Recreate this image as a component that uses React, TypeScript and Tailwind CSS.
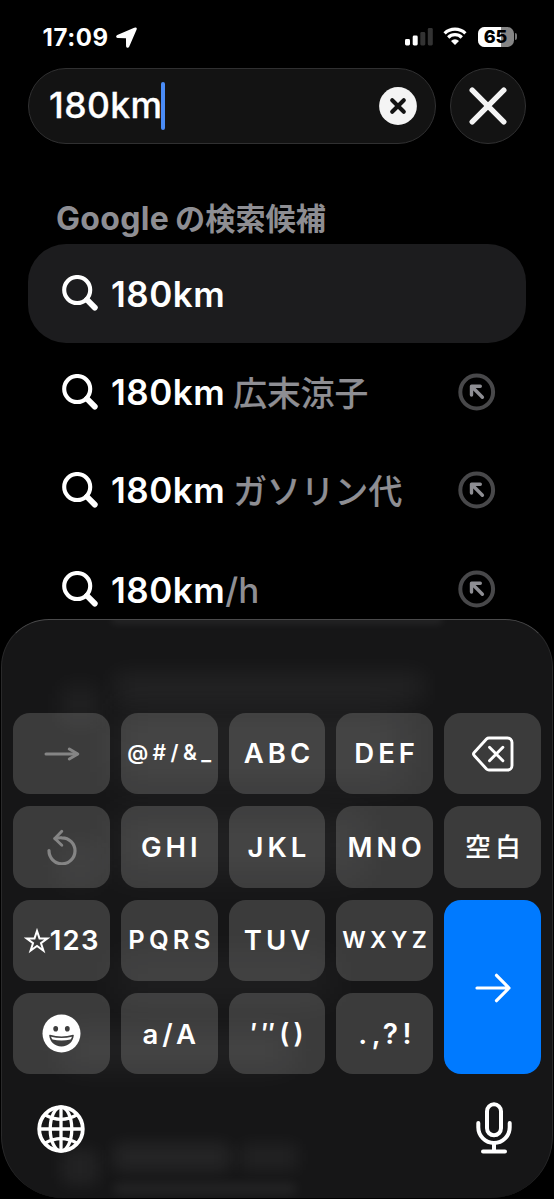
import React from "react";

interface Suggestion {
  id: number;
  typed: string;
  rest: string;
  cjk?: boolean;
}

interface KeyItem {
  id: string;
  label: React.ReactNode;
  className?: string;
}

const suggestions: Suggestion[] = [
  { id: 1, typed: "180km", rest: "" },
  { id: 2, typed: "180km", rest: "広末涼子", cjk: true },
  { id: 3, typed: "180km", rest: "ガソリン代", cjk: true },
  { id: 4, typed: "180km", rest: "/h" },
];

const SearchIcon = () => (
  <svg className="w-9 h-9 shrink-0" viewBox="0 0 36 36" fill="none" stroke="#fff">
    <circle cx="15.2" cy="15" r="13" strokeWidth="4.1" />
    <path d="M25 24.8l7.8 7.8" strokeWidth="5.8" strokeLinecap="round" />
  </svg>
);

const FillIcon = () => (
  <svg className="w-[38px] h-[38px] shrink-0" viewBox="0 0 38 38" fill="none">
    <circle cx="18.7" cy="19" r="16.4" stroke="#48484a" strokeWidth="4" />
    <path
      d="M22.3 13.2H13.5V22M14 13.7l10.4 10.6"
      stroke="#8e8e93"
      strokeWidth="3.4"
      strokeLinecap="round"
      strokeLinejoin="round"
    />
  </svg>
);

const StatusBar = () => (
  <div className="h-[68px] flex items-start pt-[25px] pl-[42.5px] pr-[37.5px]">
    <span className="text-[24px] leading-[25px] font-bold text-white w-[68px] whitespace-nowrap tracking-[0.6px]">
      17:09
    </span>
    <svg className="w-[21px] h-[21px] ml-[5px] mt-[1.5px]" viewBox="0 0 20 20" fill="#fff" stroke="#fff" strokeWidth="1.4" strokeLinejoin="round">
      <path d="M18.2 1.2 1.5 8.3c-1 .5-.8 1.5.3 1.5l7.6.1c.6 0 .8.3.8.8l.1 7.4c0 1.1 1.1 1.4 1.6.4L19 2c.3-.6-.2-1.1-.8-.8z" />
    </svg>
    <div className="ml-auto flex items-start">
      <svg className="w-7 h-[18px] mt-[3px]" viewBox="0 0 28 18">
        <rect x="0" y="11" width="5" height="6.5" rx="1.4" fill="#fff" />
        <rect x="7.7" y="7.5" width="5" height="10" rx="1.4" fill="#fff" />
        <rect x="15.3" y="4" width="5" height="13.5" rx="1.4" fill="#333" />
        <rect x="22.8" y="0" width="5" height="17.5" rx="1.4" fill="#333" />
      </svg>
      <svg className="w-6 h-[18px] ml-[10.5px] mt-[2px]" viewBox="0 0 24 18" fill="none" stroke="#fff">
        <path d="M1.6 6.4a15 15 0 0 1 20.8 0" strokeWidth="3.3" />
        <path d="M5.2 10.5a9.6 9.6 0 0 1 13.6 0" strokeWidth="3.2" />
        <path d="M12 18l-4-4.1a5.8 5.8 0 0 1 8 0z" fill="#fff" stroke="none" />
      </svg>
      <div className="relative ml-[10.5px] mt-[2px] w-9 h-5 rounded-[6.5px] overflow-hidden bg-[#858585]">
        <div className="w-[23.5px] h-5 bg-white" />
        <span className="absolute inset-0 text-center text-[18px] leading-5 font-extrabold text-black">
          65
        </span>
      </div>
      <div className="w-[2px] h-[7px] ml-[1px] mt-[8px] rounded-r-full bg-[#777]" />
    </div>
  </div>
);

const SearchBar = () => (
  <div className="flex gap-[14px] px-7">
    <div className="w-[408px] h-[76px] rounded-full border border-[#303031] bg-[#131313] flex items-center pl-[20px] pr-[18px] pb-[1px]">
      <span className="text-[35.5px] leading-none font-medium text-white w-[112px] tracking-[0.4px] whitespace-nowrap [-webkit-text-stroke:0.3px]">
        180km
      </span>
      <div className="relative w-[3.5px] h-[48px] rounded-full bg-[#4a8cf7]" />
      <svg className="w-[38px] h-[38px] ml-auto" viewBox="0 0 38 38">
        <circle cx="19" cy="19" r="18.9" fill="#f4f4f4" />
        <path d="M13.2 13.2l11.6 11.6M24.8 13.2L13.2 24.8" stroke="#131313" strokeWidth="4.1" strokeLinecap="round" />
      </svg>
    </div>
    <div className="w-[76px] h-[76px] rounded-full border border-[#303031] bg-[#131313] flex items-center justify-center pb-[1px]">
      <svg className="w-[38px] h-[38px]" viewBox="0 0 38 38">
        <path d="M3.2 3.2l31.6 31.6M34.8 3.2L3.2 34.8" stroke="#f4f4f4" strokeWidth="5.4" strokeLinecap="round" />
      </svg>
    </div>
  </div>
);

// Soft shapes of the list shining through the keyboard glass
const glows = [
  "left-[110px] top-[-5px] w-[330px] h-[8px] bg-white/8 blur-[4px]",
  "left-[112px] top-[54px] w-[310px] h-[26px] bg-white/6 blur-[12px]",
  "left-[60px] top-[66px] w-[36px] h-[36px] bg-white/5 blur-[12px]",
  "left-[112px] top-[90px] w-[290px] h-[76px] bg-white/5 blur-[20px]",
  "left-[60px] top-[228px] w-[36px] h-[36px] bg-white/5 blur-[16px]",
  "left-[112px] top-[195px] w-[250px] h-[60px] bg-white/5 blur-[20px]",
  "left-[112px] top-[340px] w-[220px] h-[36px] bg-white/5 blur-[20px]",
  "left-[60px] top-[412px] w-[230px] h-[36px] bg-white/5 blur-[16px]",
  "left-[112px] top-[524px] w-[116px] h-[26px] bg-white/7 blur-[9px]",
  "left-[238px] top-[524px] w-[58px] h-[26px] bg-white/5 blur-[9px]",
  "left-[60px] top-[530px] w-[36px] h-[34px] bg-white/6 blur-[9px]",
  "left-[112px] top-[564px] w-[182px] h-[10px] bg-white/7 blur-[6px]",
];

const keys: KeyItem[] = [
  {
    id: "next",
    label: (
      <svg className="w-9 h-[18px]" viewBox="0 0 36 18" fill="none" stroke="#858585" strokeLinecap="round" strokeLinejoin="round">
        <path d="M2 9h31" strokeWidth="3" />
        <path d="M25.3 4l8.5 5-8.5 5" strokeWidth="3" />
      </svg>
    ),
    className: "pt-[1px]",
  },
  { id: "sym", label: "@#/&_", className: "text-[21px] font-semibold tracking-[4.4px] pl-[4px] pb-[1px]" },
  { id: "abc", label: "ABC", className: "text-[27.5px] font-semibold tracking-[4px] pl-[4px] pt-[1px]" },
  { id: "def", label: "DEF", className: "text-[27.5px] font-semibold tracking-[4px] pl-[4px] pt-[1px]" },
  {
    id: "delete",
    label: (
      <svg className="w-[42px] h-[36px]" viewBox="0 0 42 36" fill="none" stroke="#fff" strokeLinecap="round" strokeLinejoin="round">
        <path d="M17 2h18.5a4.5 4.5 0 0 1 4.5 4.5v23a4.5 4.5 0 0 1-4.5 4.5H17q-1.5 0-2.5-1L2.2 19.5q-1.4-1.5 0-3L14.5 3Q15.5 2 17 2z" strokeWidth="2.9" />
        <path d="M17.5 11.3l13.4 13.4M30.9 11.3L17.5 24.7" strokeWidth="3" />
      </svg>
    ),
    className: "pl-[1px] pt-[2px]",
  },
  {
    id: "undo",
    label: (
      <svg className="w-[32px] h-[36px]" viewBox="0 0 32 36" fill="none" stroke="#858585" strokeWidth="3.2" strokeLinecap="round" strokeLinejoin="round">
        <path d="M3 21.5A13 13 0 1 0 16 8.8q-3.6-.2-7 .8" />
        <path d="M15.8 2.3L8.8 9.5l7 6.7" strokeWidth="2.9" />
      </svg>
    ),
    className: "pt-[1px]",
  },
  { id: "ghi", label: "GHI", className: "text-[27.5px] font-semibold tracking-[4px] pl-[4px] pt-[1px]" },
  { id: "jkl", label: "JKL", className: "text-[27.5px] font-semibold tracking-[4px] pl-[4px] pt-[1px]" },
  { id: "mno", label: "MNO", className: "text-[27px] font-semibold tracking-[4px] pl-[4px] pt-[1px]" },
  { id: "space", label: "空白", className: "text-[25.5px] font-medium tracking-[4.5px] pl-[6px] [-webkit-text-stroke:0.15px]" },
  {
    id: "num",
    label: (
      <>
        <svg className="w-[26px] h-[26px]" viewBox="0 0 25 25" fill="none" stroke="#fff" strokeWidth="1.9">
          <path d="M12.5 2.8l2.4 7.2h7.6l-6.2 4.5 2.4 7.3-6.2-4.5-6.2 4.5 2.4-7.3L2.5 10h7.6z" />
        </svg>
        <span>123</span>
      </>
    ),
    className: "text-[27.5px] font-semibold tracking-[1.3px] pt-[1px]",
  },
  { id: "pqrs", label: "PQRS", className: "text-[25.5px] font-semibold tracking-[4.2px] pl-[4px] pb-[1px]" },
  { id: "tuv", label: "TUV", className: "text-[27.5px] font-semibold tracking-[4px] pl-[4px] pt-[1px]" },
  { id: "wxyz", label: "WXYZ", className: "text-[23px] font-semibold tracking-[4.4px] pl-[4px]" },
  {
    id: "go",
    label: (
      <svg className="w-9 h-[30px]" viewBox="0 0 36 30" fill="none" stroke="#fff" strokeWidth="3.2" strokeLinecap="round" strokeLinejoin="round">
        <path d="M2 15h32M21.5 2.3L34 15 21.5 27.7" />
      </svg>
    ),
    className: "row-span-2 bg-[#007aff] pl-[2px] pt-[1px]",
  },
  {
    id: "emoji",
    label: (
      <svg className="w-[39px] h-[39px]" viewBox="0 0 39 39">
        <circle cx="19.5" cy="19.5" r="19" fill="#fff" />
        <ellipse cx="13.7" cy="14.8" rx="2.4" ry="2.8" fill="#3e3e3e" />
        <ellipse cx="25.3" cy="14.8" rx="2.4" ry="2.8" fill="#3e3e3e" />
        <path d="M8 20.8q11.5 3.4 23 0c.5-.1.9.2.8.8-.7 6.3-5.3 10.9-12.3 10.9S7.9 27.9 7.2 21.6c-.1-.6.3-.9.8-.8z" fill="#3e3e3e" />
        <path d="M9 22.7q10.5 2.7 21 0-.5 1.7-1.5 2.8-9 2.2-18 0-1-1.1-1.5-2.8z" fill="#fff" />
      </svg>
    ),
  },
  { id: "case", label: "a/A", className: "text-[27.5px] font-semibold tracking-[4px] pl-[4px] pt-[1px]" },
  { id: "quote", label: "′″()", className: "text-[27px] font-semibold tracking-[4px] pl-[4px]" },
  { id: "punct", label: ".,?!", className: "text-[28px] font-semibold tracking-[4.6px] pl-[5px]" },
];

const GlobeIcon = () => (
  <svg className="w-12 h-12 mt-[2px]" viewBox="0 0 48 48" fill="none" stroke="#fff" strokeWidth="3.3">
    <circle cx="24" cy="24" r="21.8" strokeWidth="3.8" />
    <ellipse cx="24" cy="24" rx="10.8" ry="22" />
    <path d="M24 2v44M2 24h44" />
    <path d="M7.5 9.5q16.5 9.6 33 0M7.5 38.5q16.5-9.6 33 0" />
  </svg>
);

const MicIcon = () => (
  <svg className="w-9 h-[52px]" viewBox="0 0 36 52" fill="none" stroke="#fff" strokeWidth="4" strokeLinecap="round">
    <rect x="11" y="2.3" width="14" height="31" rx="7" />
    <path d="M2.3 21v4.3a15.7 15.7 0 0 0 31.4 0V21M18 41.5v8M7 49.5h22" />
  </svg>
);

const Keyboard = () => (
  <div className="relative w-[552px] h-[579px] mx-auto mt-[-19px] rounded-t-[48px] rounded-b-[62px] overflow-hidden bg-[#161617] border border-b-0 border-[#29292a] border-t-[#4a4a4b]">
    {glows.map((glow) => (
      <div key={glow} className={`absolute ${glow}`} />
    ))}
    <div className="relative grid grid-cols-5 grid-rows-4 gap-x-[10.8px] gap-y-[12.2px] h-[361.5px] mt-[92.5px] mx-[11.3px]">
      {keys.map((key) => (
        <button
          key={key.id}
          className={`flex items-center justify-center min-w-0 rounded-[17px] text-white whitespace-nowrap leading-none ${
            key.id === "go" ? "" : "bg-[#fffffa]/16"
          } ${key.className ?? ""}`}
        >
          {key.label}
        </button>
      ))}
    </div>
    <div className="relative flex justify-between items-center mt-[28px] pl-[34.5px] pr-[40px]">
      <GlobeIcon />
      <MicIcon />
    </div>
  </div>
);

const App = () => {
  return (
    <div
      lang="ja"
      className="w-[554px] h-[1199px] overflow-hidden bg-black font-['Inter','Noto_Sans_CJK_JP',sans-serif]"
    >
      <StatusBar />
      <SearchBar />

      <h2 className="h-[100px] pt-[56px] pl-[56px] leading-[38px] font-bold text-[#8e8e93] whitespace-nowrap">
        <span className="text-[32px] tracking-[0.3px]">Google</span>
        <span className="ml-[6px] text-[30.2px]">の検索候補</span>
      </h2>

      <div className="px-7">
        {suggestions.map((item, index) => (
          <div
            key={item.id}
            className={`h-[98.6px] flex items-center pl-[34px] pr-[30px] rounded-[38px] ${
              index === 0 ? "bg-[#1c1c1e]" : ""
            }`}
          >
            <SearchIcon />
            <div className="ml-[13px] pt-[1px] text-[35px] leading-[44px] font-semibold whitespace-nowrap">
              <span className="text-white tracking-[0.5px]">{item.typed}</span>
              <span
                className={
                  item.cjk
                    ? "relative top-[1px] ml-[8px] text-[33.8px] font-medium text-[#8e8e93] [-webkit-text-stroke:0.15px]"
                    : "font-medium text-[#8e8e93]"
                }
              >
                {item.rest}
              </span>
            </div>
            {index > 0 && (
              <div className="ml-auto">
                <FillIcon />
              </div>
            )}
          </div>
        ))}
      </div>

      <Keyboard />
    </div>
  );
};

export default App;
